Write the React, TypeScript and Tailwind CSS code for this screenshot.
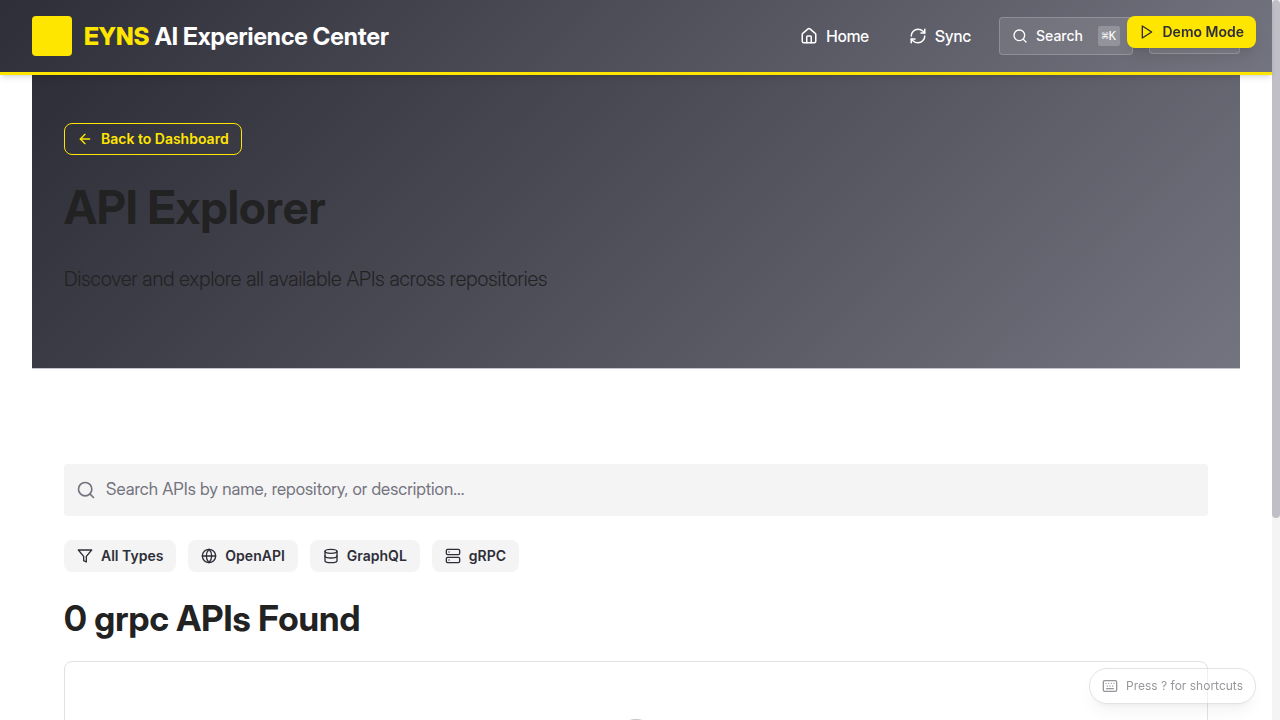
import type { ReactNode } from "react";
import { ArrowLeft, Database, Globe, House, Keyboard, RefreshCw, Search, Server } from "lucide-react";

function PlayIcon() {
  return (
    <svg width="16" height="16" viewBox="0 0 24 24" fill="none" stroke="currentColor" strokeWidth="2" strokeLinecap="round" strokeLinejoin="round" aria-hidden="true">
      <polygon points="5 3 19 12 5 21 5 3" />
    </svg>
  );
}

function FilterIcon() {
  return (
    <svg width="16" height="16" viewBox="0 0 24 24" fill="none" stroke="currentColor" strokeWidth="2" strokeLinecap="round" strokeLinejoin="round" aria-hidden="true">
      <polygon points="22 3 2 3 10 12.46 10 19 14 21 14 12.46 22 3" />
    </svg>
  );
}

function NavLink({ icon, label }: { icon: ReactNode; label: string }) {
  return (
    <a
      href="#"
      className="flex items-center gap-2 px-3 py-2 font-['Inter_Display','Inter',sans-serif] text-base font-medium text-white"
    >
      {icon}
      {label}
    </a>
  );
}

function FilterButton({ icon, label }: { icon: ReactNode; label: string }) {
  return (
    <button
      type="button"
      className="flex h-8 items-center gap-2 rounded-lg border border-transparent bg-[#f4f4f4] px-3 text-sm font-semibold text-[#2e2e38]"
    >
      {icon}
      {label}
    </button>
  );
}

function Header() {
  return (
    <header className="relative z-10 flex shrink-0 items-center justify-between border-b-3 border-[#ffe600] bg-linear-135 from-[#2e2e38] to-[#747480] px-8 shadow-md">
      <div className="flex h-18 items-center gap-3">
        <div className="size-10 rounded bg-[#ffe600]" />
        <span className="pt-0.5 font-['Inter_Display','Inter',sans-serif] text-2xl font-bold text-white">
          <span className="font-extrabold text-[#ffe600]">EYNS</span> AI Experience Center
        </span>
      </div>
      <nav className="flex items-center gap-4">
        <NavLink icon={<House size={18} />} label="Home" />
        <NavLink icon={<RefreshCw size={18} />} label="Sync" />
        <button
          type="button"
          className="flex h-[38px] w-[134px] items-center gap-2 rounded border border-white/20 bg-white/10 px-3 text-sm font-medium text-white"
        >
          <Search size={16} />
          Search
          <kbd className="ml-auto flex h-5 items-center rounded-xs bg-white/20 px-1 font-['DejaVu_Sans_Mono',monospace] text-xs font-normal">
            ⌘K
          </kbd>
        </button>
        <button
          type="button"
          aria-label="Account"
          className="h-9 w-[91px] rounded border border-white/20 bg-white/10"
        />
      </nav>
    </header>
  );
}

function Hero() {
  return (
    <section className="mx-8 border-b border-[#c4c4cd] bg-linear-135 from-[#2e2e38] to-[#747480] px-8 pt-12 pb-[73px]">
      <a
        href="#"
        className="flex h-8 w-fit items-center gap-2 rounded-lg border border-[#ffe600] px-3 text-sm font-semibold text-[#ffe600]"
      >
        <ArrowLeft size={16} />
        Back to Dashboard
      </a>
      <h1 className="mt-6 font-['Inter_Display','Inter',sans-serif] text-[46px] leading-[56px] font-bold text-[#222222]">
        API Explorer
      </h1>
      <p className="mt-7 font-['Inter_Display','Inter',sans-serif] text-xl leading-8 font-light text-[#222222]">
        Discover and explore all available APIs across repositories
      </p>
    </section>
  );
}

function Results() {
  return (
    <section className="px-16 pt-[95px]">
      <label className="flex h-[52px] items-center gap-[10px] rounded bg-[#f4f4f4] px-3 text-[#747480]">
        <Search size={20} />
        <input
          type="search"
          aria-label="Search APIs"
          placeholder="Search APIs by name, repository, or description..."
          className="min-w-0 flex-1 bg-transparent font-['Inter_Display','Inter',sans-serif] text-[17px] outline-none placeholder:text-[#747480]"
        />
      </label>
      <div className="mt-6 flex gap-3">
        <FilterButton icon={<FilterIcon />} label="All Types" />
        <FilterButton icon={<Globe size={16} />} label="OpenAPI" />
        <FilterButton icon={<Database size={16} />} label="GraphQL" />
        <FilterButton icon={<Server size={16} />} label="gRPC" />
      </div>
      <h2 className="mt-6 font-['Inter_Display','Inter',sans-serif] text-[35px] leading-[45px] font-bold text-[#222222]">
        0 grpc APIs Found
      </h2>
      <div className="mt-5 flex h-64 justify-center rounded-lg border border-[#e1e1e6] pt-[55px]">
        <Globe size={48} className="text-[#c4c4cd]" />
      </div>
    </section>
  );
}

export default function App() {
  return (
    <div className="flex h-screen bg-white font-['Inter',sans-serif]">
      <div className="flex min-w-0 flex-1 flex-col">
        <Header />
        <main className="min-h-0 flex-1 overflow-y-auto [scrollbar-width:none]">
          <Hero />
          <Results />
        </main>
      </div>
      <div aria-hidden="true" className="w-2 bg-[#f4f4f4]">
        <div className="h-[72%] rounded-full bg-[#c0bfc7]" />
      </div>
      <button
        type="button"
        className="fixed top-4 right-6 z-20 flex h-8 items-center gap-2 rounded-lg bg-[#ffe600] px-3 text-sm font-semibold text-[#2e2e38] shadow-lg"
      >
        <PlayIcon />
        Demo Mode
      </button>
      <button
        type="button"
        className="fixed right-6 bottom-4 z-20 flex h-9 items-center gap-2 rounded-full border border-[#c4c4cd] bg-white px-3 text-xs text-[#2e2e38] opacity-50 shadow-lg"
      >
        <Keyboard size={16} />
        Press ? for shortcuts
      </button>
    </div>
  );
}
